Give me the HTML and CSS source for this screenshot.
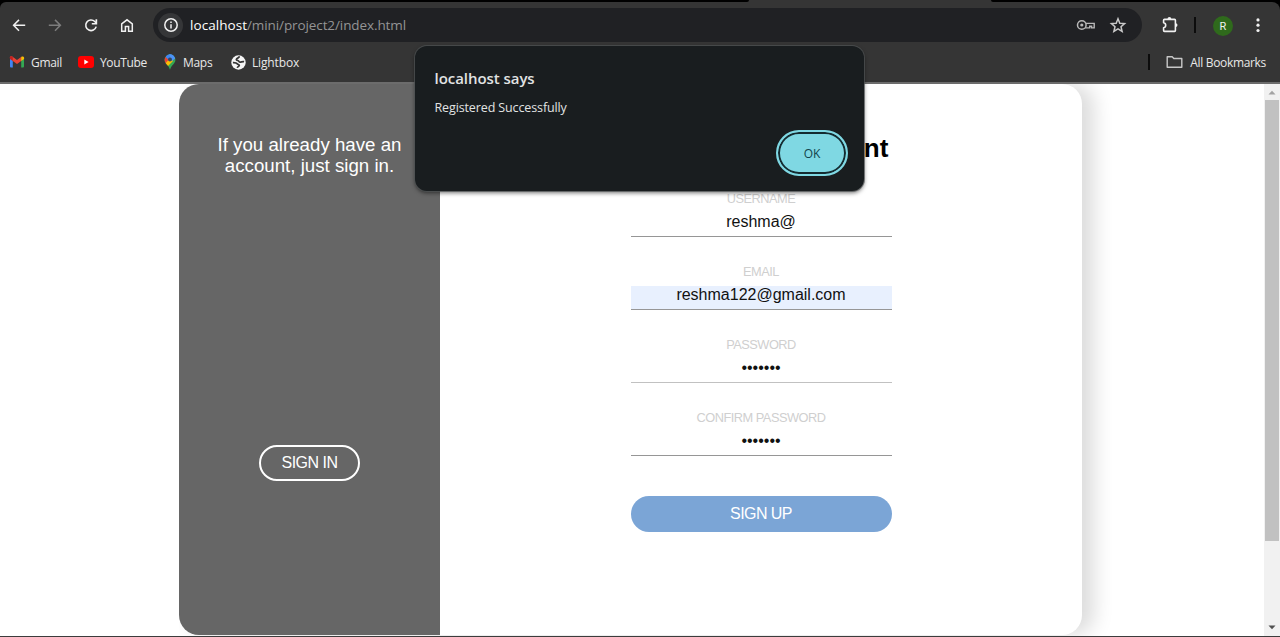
FILE: index.html
```html
<!DOCTYPE html>
<html lang="en">
<head>
<meta charset="utf-8">
<title>Sign up</title>
<link rel="stylesheet" href="styles.css">
</head>
<body>
<div class="browser">
  <div class="tabstrip"><span class="tab-left"></span><span class="tab-right"></span></div>
  <header class="chrome">
    <div class="toolbar">
      <nav class="nav-icons">
        <svg width="20" height="20" viewBox="0 0 20 20"><path d="M16.200 10.300H5M10 4.900 4.600 10.300l5.400 5.400" fill="none" stroke="#f1f1f1" stroke-width="1.500"/></svg>
        <svg width="20" height="20" viewBox="0 0 20 20"><path d="M3.800 10.300H15M10 4.900l5.400 5.400-5.400 5.400" fill="none" stroke="#7d7d7d" stroke-width="1.500"/></svg>
        <svg width="20" height="20" viewBox="0 0 20 20"><path d="M15.200 11.600a5.300 5.300 0 1 1-1.400-5.100l1.500 1.700" fill="none" stroke="#f1f1f1" stroke-width="1.600"/><path d="M16.200 4.200v5.400h-5.400V8h3.700V4.200z" fill="#f1f1f1"/></svg>
        <svg width="20" height="20" viewBox="0 0 20 20"><path d="M4.700 8.800 10 4.800l5.300 4v7.500h-3.700v-4.700H8.400v4.700H4.700z" fill="none" stroke="#f1f1f1" stroke-width="1.500"/></svg>
      </nav>
      <div class="omnibox">
        <span class="site-info"><svg width="16" height="16" viewBox="0 0 16 16"><circle cx="8" cy="8" r="6.200" fill="none" stroke="#f1f1f1" stroke-width="1.500"/><path d="M8 7.200v4.200M8 4.500v1.600" stroke="#f1f1f1" stroke-width="1.500"/></svg></span>
        <span class="url"><b>localhost</b>/mini/project2/index.html</span>
        <svg class="key" width="20" height="14" viewBox="0 0 20 14"><circle cx="5.800" cy="7" r="4.300" fill="none" stroke="#b8b8b8" stroke-width="1.500"/><circle cx="5.800" cy="7" r="1.600" fill="#b8b8b8"/><path d="M9.900 5.400h8.300v4.500h-2.600V8.300h-1.900v1.600H9.400" fill="none" stroke="#b8b8b8" stroke-width="1.400"/></svg>
        <svg width="18" height="18" viewBox="0 0 18 18"><path d="m9 2.800 1.800 4.400 4.800.4-3.600 3.100 1.100 4.600L9 12.800l-4.100 2.500L6 10.700 2.400 7.600l4.800-.4z" fill="none" stroke="#c9c9c9" stroke-width="1.500"/></svg>
      </div>
      <div class="tools">
        <svg width="20" height="20" viewBox="0 0 20 20"><path d="M4.400 4.400h10.200q.8 0 .8.800v10.400q0 .8-.8.800H4.400q-.8 0-.8-.8v-2.800c2.800-.6 2.800-4.400 0-5V5.200q0-.8.8-.8z" fill="none" stroke="#f1f1f1" stroke-width="1.600" stroke-linejoin="round"/><path d="M7.500 4a1.900 1.900 0 0 1 3.800 0zM15.600 8.200a1.900 1.900 0 0 1 0 3.800z" fill="#f1f1f1"/></svg>
        <i class="divider"></i>
        <span class="avatar">R</span>
        <svg width="4" height="16" viewBox="0 0 4 16" fill="#f1f1f1"><circle cx="2" cy="2.900" r="1.600"/><circle cx="2" cy="8.200" r="1.600"/><circle cx="2" cy="13.500" r="1.600"/></svg>
      </div>
    </div>
    <div class="bookmarks">
      <a class="bm bm-gmail"><svg width="16" height="12" viewBox="0 0 16 12"><path d="M1 1.500h2.800v10H2a1 1 0 0 1-1-1z" fill="#4285f4"/><path d="M12.200 1.500H15v9a1 1 0 0 1-1 1h-1.800z" fill="#34a853"/><path d="M.8 1.600C1 .2 2.600-.1 3.600.7L8 4 12.400.7 12.200 5 8 8.100 3.800 5z" fill="#ea4335"/><path d="M12.200.9c1.300-1 2.900-.4 2.900.9v1.100L12.200 5z" fill="#fbbc04"/><path d="M.9 1.600c.2-1.400 1.900-1.700 2.900-.7V5L.9 2.900z" fill="#c5221f"/></svg><span>Gmail</span></a>
      <a class="bm bm-youtube"><svg width="16" height="12" viewBox="0 0 16 12"><rect width="16" height="12" rx="3" fill="#f00"/><path d="M6.300 3.500v5l4.300-2.500z" fill="#fff"/></svg><span>YouTube</span></a>
      <a class="bm bm-maps"><svg width="12" height="16" viewBox="0 0 12 16"><defs><clipPath id="pin"><path d="M6 .3a5.400 5.400 0 0 1 5.400 5.400c0 4-4.200 5.300-5.400 10-1.200-4.700-5.400-6-5.400-10A5.400 5.400 0 0 1 6 .3z"/></clipPath></defs><g clip-path="url(#pin)"><path d="M0 0h12v16H0z" fill="#34a853"/><path d="M0 0h12L5 8z" fill="#4285f4"/><path d="M0 2l5 4-4 5H0z" fill="#ea4335"/><path d="M1 10 7 3l2 4-6 6z" fill="#fbbc04"/><path d="M5 0h7v4L8 7z" fill="#4b92f7"/></g><circle cx="6" cy="5.600" r="2" fill="#2f4867"/></svg><span>Maps</span></a>
      <a class="bm bm-lightbox"><svg width="15" height="15" viewBox="0 0 15 15"><circle cx="7.500" cy="7.500" r="7.200" fill="#f5f5f5"/><path d="M8.800 1.900C7 2 7.200 3.400 5.800 3.600c-1 .9-.3 2 .9 1.900 1.200.1 1 1.600 2.500 1.700 1.200 0 2.200-.9 3.900-.5M1.900 7.700c1.800-.1 3.700.2 4.500 1.200.8.800 2 .5 1.900 1.600-.3 1-1.700.9-2 2.400" fill="none" stroke="#353535" stroke-width="1.700"/></svg><span>Lightbox</span></a>
      <div class="all"><i class="divider"></i><svg width="17" height="14" viewBox="0 0 17 14"><path d="M1.200 1.700h5l1.600 1.800h8v8.800H1.200z" fill="none" stroke="#c7c7c7" stroke-width="1.400" stroke-linejoin="round"/></svg><span>All Bookmarks</span></div>
    </div>
  </header>
  <div class="viewport">
    <main class="page">
      <div class="card">
        <aside class="side">
          <p class="side-text">If you already have an account, just sign in.</p>
          <button class="sign-in">SIGN IN</button>
        </aside>
        <form class="form">
          <h2 class="title">Create your Account</h2>
          <label class="field"><span class="label">USERNAME</span><span class="value">reshma@</span></label>
          <label class="field"><span class="label">EMAIL</span><span class="value autofilled">reshma122@gmail.com</span></label>
          <label class="field"><span class="label">PASSWORD</span><span class="value light">•••••••</span></label>
          <label class="field"><span class="label">CONFIRM PASSWORD</span><span class="value">•••••••</span></label>
          <button type="button" class="sign-up">SIGN UP</button>
        </form>
      </div>
    </main>
    <div class="scrollbar">
      <svg width="8" height="5" viewBox="0 0 8 5"><path d="M.5 4.500 4 .8l3.500 3.700z" fill="#a3a3a3"/></svg>
      <div class="thumb"></div>
      <svg class="down" width="8" height="5" viewBox="0 0 8 5"><path d="M.5.5 4 4.200 7.500.5z" fill="#505050"/></svg>
    </div>
  </div>
  <section class="dialog">
    <h1 class="dialog-title">localhost says</h1>
    <p class="dialog-text">Registered Successfully</p>
    <button class="ok">OK</button>
  </section>
</div>
</body>
</html>
```
FILE: styles.css
```css
* { box-sizing: border-box; }
body { margin: 0; background: #fff; font-family: "Liberation Sans", Arial, sans-serif; }
button { font-family: inherit; padding: 0; }
svg { display: block; flex: none; }

.browser { position: relative; width: 1280px; height: 637px; overflow: hidden; display: flex; flex-direction: column; background: #000; border-bottom: 1px solid #3c3c3c; }

.tabstrip { height: 2px; display: flex; justify-content: space-between; background: #353535; flex: none; }
.tab-left { width: 749px; background: #000; border-bottom-right-radius: 3px; }
.tab-right { width: 289px; background: #000; border-bottom-left-radius: 3px; }

.chrome { height: 82px; flex: none; background: #353535; border-bottom: 2px solid #6c6c6c; border-radius: 6px 8px 0 0; font-family: "Open Sans", "Noto Sans", sans-serif; color: #e8e8e8; }
.toolbar { height: 46px; display: flex; align-items: center; padding-left: 9px; }
.nav-icons { display: flex; gap: 16px; width: 144px; }
.omnibox { width: 989px; height: 34px; border-radius: 17px; background: #202124; display: flex; align-items: center; padding: 0 15px 0 5px; }
.site-info { width: 25px; height: 25px; border-radius: 50%; background: #353638; display: flex; align-items: center; justify-content: center; margin-right: 7px; }
.url { flex: 1; font-size: 13.5px; letter-spacing: -0.1px; color: #949494; white-space: nowrap; }
.url b { font-weight: 400; color: #fff; letter-spacing: 0.05px; }
.key { margin-right: 13px; }
.tools { display: flex; align-items: center; flex: 1; padding: 0 20px 0 18px; }
.divider { width: 2px; height: 16px; background: #0c0c0c; }
.tools .divider { margin-left: 14px; }
.avatar { width: 20px; height: 20px; border-radius: 50%; background: #2f6a1c; color: #f0f0f0; font: 11px/21px Roboto, sans-serif; text-align: center; margin: 1px auto 0 17px; }

.bookmarks { height: 28px; display: flex; align-items: center; padding: 0 14px 0 9px; font-size: 12px; white-space: nowrap; }
.bm { display: flex; align-items: center; gap: 6px; }
.bm-gmail { width: 69px; letter-spacing: -0.3px; }
.bm-youtube { width: 86px; letter-spacing: -0.35px; }
.bm-maps { width: 67px; gap: 7px; letter-spacing: -0.3px; }
.bm-lightbox { letter-spacing: -0.15px; }
.all { margin-left: auto; display: flex; align-items: center; letter-spacing: -0.33px; }
.all svg { margin: 0 7px 0 16px; }

.viewport { flex: 1; min-height: 0; display: flex; background: #fff; }
.page { flex: 1; padding-left: 179px; overflow: hidden; }
.card { width: 903px; height: 551px; display: flex; background: #fff; border-radius: 20px; box-shadow: 12px 0 20px rgba(0, 0, 0, .14); clip-path: inset(0 -60px -10px 0); }
.side { width: 261px; background: #666; border-radius: 20px 0 0 20px; color: #fff; display: flex; flex-direction: column; align-items: center; }
.side-text { margin: 50px 30px 0; font-size: 18.7px; line-height: 21px; text-align: center; height: 311px; }
.sign-in { width: 101px; height: 36px; border: 2px solid #fff; border-radius: 18px; background: transparent; color: #fff; font-size: 16px; line-height: 30px; letter-spacing: -0.5px; }

.form { flex: 1; display: flex; flex-direction: column; align-items: center; }
.title { margin: 49px 0 28px; font-size: 26px; line-height: 30px; color: #000; }
.field { width: 261px; margin-bottom: 28px; display: flex; flex-direction: column; text-align: center; }
.label { font-size: 12.8px; line-height: 15px; margin-bottom: 7px; color: #cfcfcf; letter-spacing: -0.5px; height: 15px; }
.field { margin-bottom: 27px; }
.value { height: 24px; font-size: 16px; line-height: 18px; color: #111; border-bottom: 1px solid #969696; }
.light { border-color: #c1c1c1; }
.autofilled { background: #e8f0fe; }
.sign-up { width: 261px; height: 36px; margin-top: 13px; border: 0; border-radius: 18px; background: #7ba5d6; color: #fff; font-size: 16px; letter-spacing: -0.55px; }

.scrollbar { width: 16px; background: #f1f1f1; display: flex; flex-direction: column; align-items: center; padding: 6px 0; }
.thumb { width: 14px; height: 441px; margin-top: 5px; background: #c1c1c1; }
.down { margin-top: auto; }

.dialog { position: absolute; left: 415px; top: 46px; width: 449px; height: 145px; background: #191d1f; border-radius: 12px; box-shadow: 0 0 0 1px rgba(80, 84, 86, .7), 0 2px 4px rgba(0, 0, 0, .55); padding: 21px 16px 15px 19.5px; display: flex; flex-direction: column; font-family: "Open Sans", "Noto Sans", sans-serif; color: #e1e3e3; }
.dialog-title { margin: 0 0 9px; font-size: 15px; line-height: 22px; font-weight: 600; letter-spacing: -0.05px; }
.dialog-text { margin: 0; font-size: 12.5px; line-height: 20px; letter-spacing: -0.12px; }
.ok { align-self: flex-end; margin-top: auto; width: 72px; height: 46px; border: 2px solid #7fd8e3; border-radius: 23px; background: #7fd8e3; box-shadow: inset 0 0 0 2px #142b30; color: #12444b; font-size: 12px; font-weight: 500; }
```
